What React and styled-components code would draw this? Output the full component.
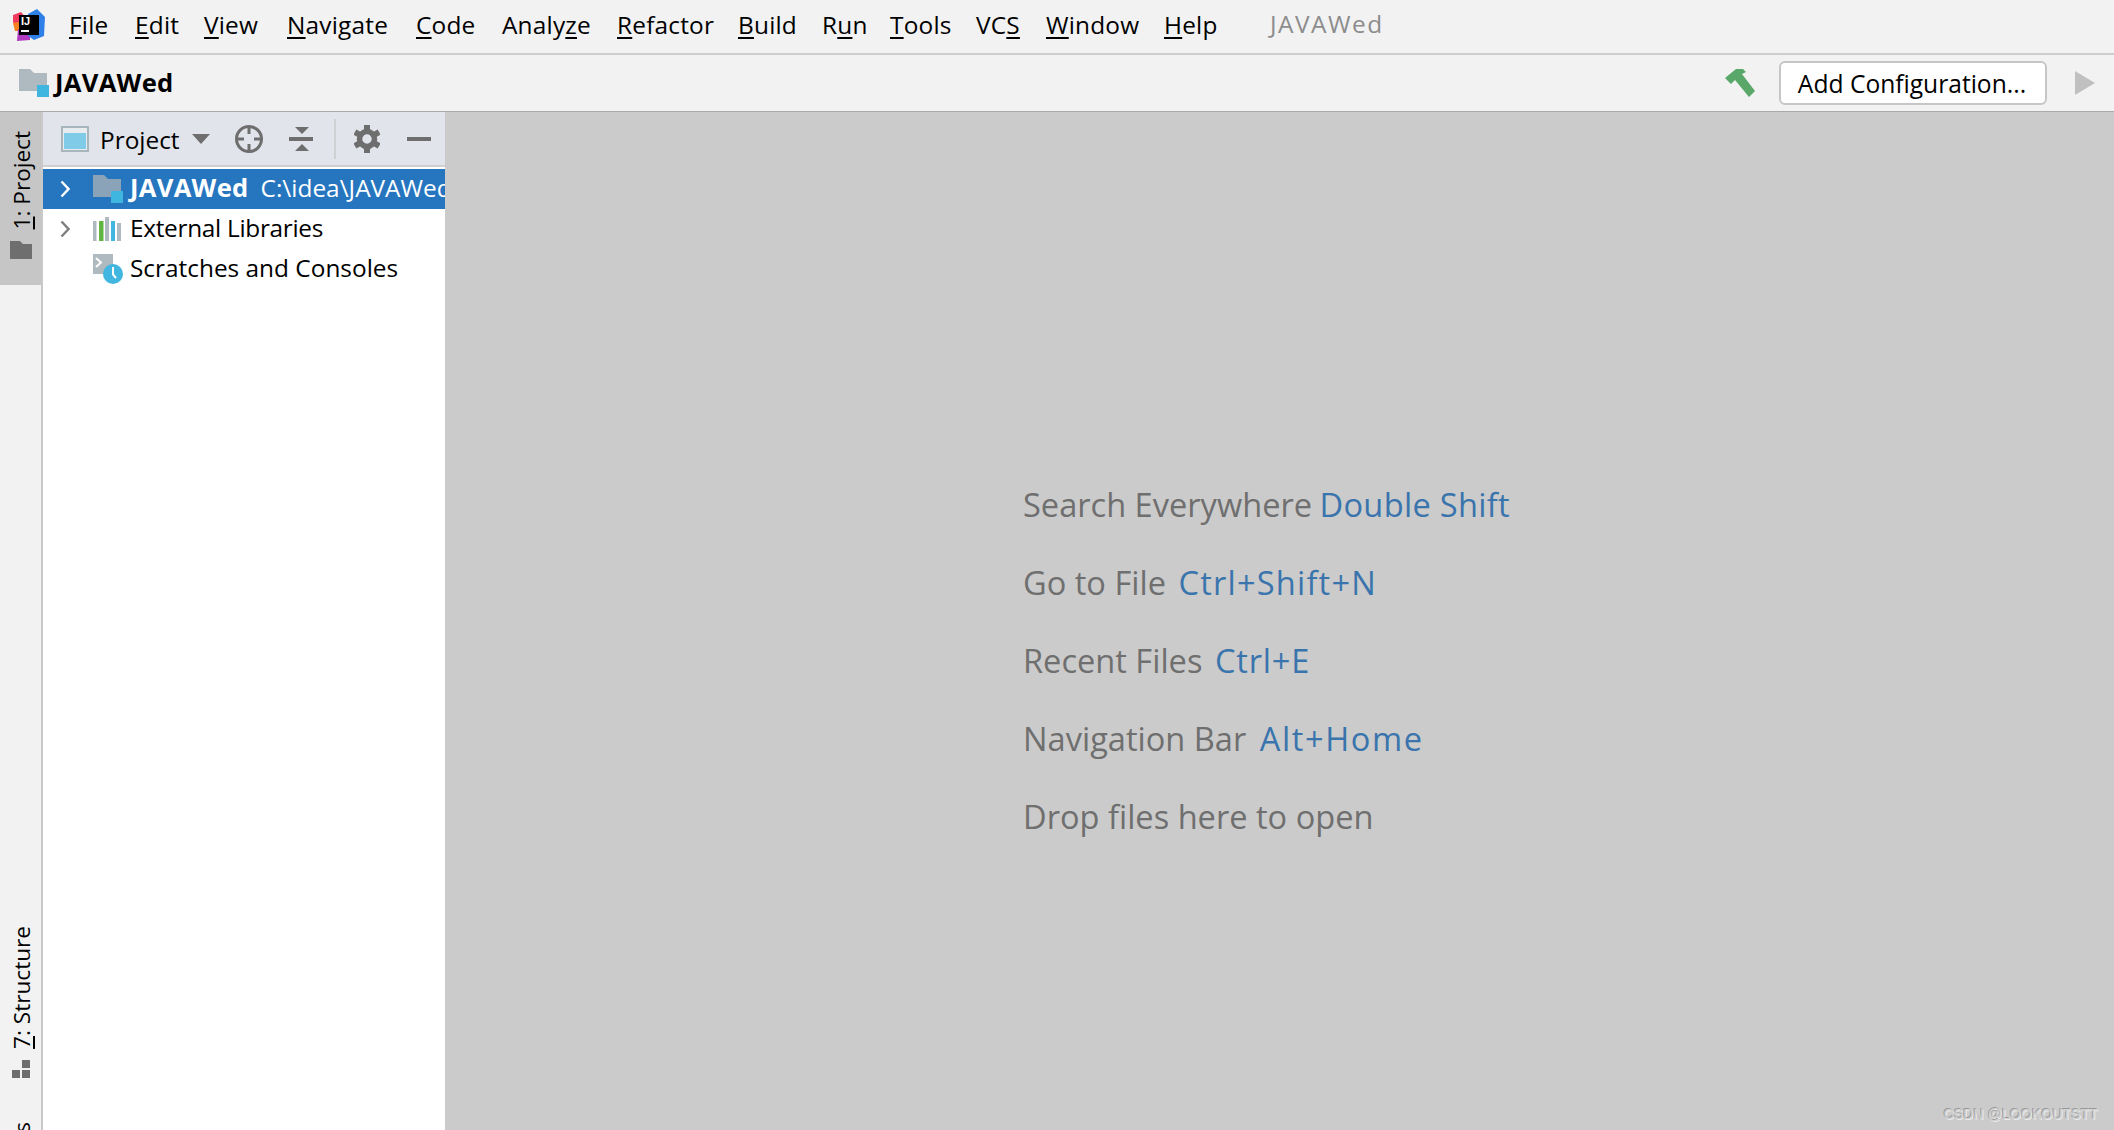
import React from "react";
import styled, { createGlobalStyle } from "styled-components";

const uiFont = `"Open Sans", "Noto Sans", sans-serif`;

const GlobalStyle = createGlobalStyle`
  html, body {
    margin: 0;
    padding: 0;
    overflow: hidden;
    background: #f2f2f2;
  }
  * {
    box-sizing: border-box;
  }
`;

const menuItems = [
  { pre: "", key: "F", post: "ile", w: 66 },
  { pre: "", key: "E", post: "dit", w: 69 },
  { pre: "", key: "V", post: "iew", w: 83 },
  { pre: "", key: "N", post: "avigate", w: 129 },
  { pre: "", key: "C", post: "ode", w: 86 },
  { pre: "Analy", key: "z", post: "e", w: 115 },
  { pre: "", key: "R", post: "efactor", w: 121 },
  { pre: "", key: "B", post: "uild", w: 84 },
  { pre: "R", key: "u", post: "n", w: 68 },
  { pre: "", key: "T", post: "ools", w: 86 },
  { pre: "VC", key: "S", post: "", w: 70 },
  { pre: "", key: "W", post: "indow", w: 118 },
  { pre: "", key: "H", post: "elp", w: 105 },
];

const hints = [
  { label: "Search Everywhere", keys: "Double Shift", spacing: 0.3, gap: -1 },
  { label: "Go to File", keys: "Ctrl+Shift+N", spacing: 1.2, gap: 4 },
  { label: "Recent Files", keys: "Ctrl+E", spacing: 0.8, gap: 4 },
  { label: "Navigation Bar", keys: "Alt+Home", spacing: 1.6, gap: 5 },
  { label: "Drop files here to open" },
];

const Window = styled.div`
  width: 2114px;
  height: 1130px;
  display: flex;
  flex-direction: column;
  overflow: hidden;
  position: relative;
  font-family: ${uiFont};
  color: #000;
`;

const MenuBar = styled.div`
  height: 55px;
  flex: none;
  display: flex;
  align-items: center;
  padding: 0 0 4px 69px;
  background: #f2f2f2;
  border-bottom: 2px solid #cdcdcd;
`;

const MenuItem = styled.div`
  width: ${(p) => p.$w}px;
  font-size: 24.4px;
  letter-spacing: 0.2px;
  white-space: nowrap;
  span {
    text-decoration: underline;
    text-decoration-thickness: 2px;
    text-underline-offset: 3px;
  }
`;

const ProjectTitle = styled.div`
  font-size: 24.4px;
  letter-spacing: 1.5px;
  color: #8c8c8c;
  margin: -2px 0 0 1px;
`;

const NavBar = styled.div`
  height: 57px;
  flex: none;
  display: flex;
  align-items: center;
  padding-left: 19px;
  background: #f2f2f2;
  border-bottom: 1px solid #a9a9a9;
`;

const NavTitle = styled.div`
  font-size: 25.6px;
  font-weight: 700;
  letter-spacing: 0.3px;
  margin: -2px 0 0 6px;
`;

const ConfigButton = styled.button`
  width: 268px;
  height: 44px;
  margin-left: 24px;
  padding: 0 2px 0 0;
  background: #fff;
  border: 2px solid #c6c6c6;
  border-radius: 6px;
  font-family: ${uiFont};
  font-size: 24.6px;
  color: #000;
`;

const Glyph = styled.svg`
  flex: none;
  display: block;
  margin-left: ${(p) => p.$ml || 0}px;
  margin-top: ${(p) => p.$mt || 0}px;
  margin-right: ${(p) => p.$mr || 0}px;
`;

const Spacer = styled.div`
  flex: 1;
`;

const Body = styled.div`
  flex: 1;
  display: flex;
  min-height: 0;
`;

const Stripe = styled.div`
  width: 43px;
  flex: none;
  display: flex;
  flex-direction: column;
  background: #f2f2f2;
  border-right: 2px solid #c9c9c9;
  overflow: hidden;
`;

const StripeTab = styled.div`
  width: 41px;
  flex: none;
  height: ${(p) => p.$h}px;
  margin-top: ${(p) => p.$mt || 0}px;
  padding-top: ${(p) => p.$pt || 0}px;
  background: ${(p) => (p.$active ? "#c6c6c6" : "transparent")};
  display: flex;
  flex-direction: column;
  align-items: center;
`;

const StripeLabel = styled.div`
  writing-mode: vertical-rl;
  transform: rotate(180deg);
  margin-left: 3px;
  font-size: 22.6px;
  line-height: 26px;
  white-space: nowrap;
  span {
    text-decoration: underline;
    text-decoration-thickness: 2px;
  }
`;

const ProjectPanel = styled.div`
  width: 402px;
  flex: none;
  background: #fff;
  overflow: hidden;
`;

const PanelToolbar = styled.div`
  height: 55px;
  display: flex;
  align-items: center;
  padding: 2px 0 1px 18px;
  background: #e1e4ea;
  border-bottom: 2px solid #cfcfcf;
  margin-bottom: 2px;
`;

const PanelTitle = styled.div`
  width: 78px;
  margin-left: 11px;
  font-size: 24.4px;
  white-space: nowrap;
`;

const ToolSeparator = styled.div`
  width: 2px;
  height: 40px;
  margin-left: 21px;
  background: #cfd0d3;
`;

const TreeRow = styled.div`
  height: 40px;
  display: flex;
  align-items: center;
  padding-left: 17px;
  white-space: nowrap;
  font-size: 24.4px;
  background: ${(p) => (p.$selected ? "#2675bf" : "transparent")};
  color: ${(p) => (p.$selected ? "#fff" : "#000")};
`;

const RowName = styled.span`
  margin: -4px 0 0 7px;
  font-weight: ${(p) => (p.$bold ? 700 : 400)};
  font-size: ${(p) => (p.$bold ? "25.6px" : "inherit")};
  letter-spacing: ${(p) => p.$spacing || 0}px;
`;

const RowPath = styled.span`
  margin: -4px 0 0 12px;
`;

const EditorArea = styled.div`
  flex: 1;
  background: #cbcbcb;
  padding: 354px 0 0 578px;
`;

const Hint = styled.div`
  height: 78px;
  font-size: 32.6px;
  line-height: 78px;
  color: #6f6f6f;
  white-space: nowrap;
`;

const HintKeys = styled.span`
  color: #3a74ad;
  margin-left: ${(p) => p.$gap}px;
  letter-spacing: ${(p) => p.$spacing}px;
`;

const Watermark = styled.div`
  position: absolute;
  right: 16px;
  bottom: 8px;
  font-family: "Liberation Sans", sans-serif;
  font-size: 14px;
  letter-spacing: 0.1px;
  color: #d0d0d0;
  text-shadow: -1px -1px 0 rgba(120, 120, 120, 0.6), 1px 1px 0 rgba(255, 255, 255, 0.6);
`;

const LogoMark = styled.svg`
  position: absolute;
  left: 12px;
  top: 8px;
`;

const AppLogo = () => (
  <LogoMark width="34" height="34" viewBox="0 0 34 34">
    <polygon points="1,7 9,4 14,10 6,22 1,14" fill="#f03a5f" />
    <polygon points="1,15 8,14 8,23 3,23" fill="#f58220" />
    <polygon points="6,21 18,26 18,32 5,33" fill="#b23ac0" />
    <polygon points="16,6 25,1 33,9 32,28 22,32 15,27" fill="#2f7fe8" />
    <rect x="7" y="7" width="20" height="20" fill="#000" />
    <text x="9" y="17" fontFamily="Liberation Sans" fontSize="11" fontWeight="700" fill="#fff">IJ</text>
    <rect x="9" y="22" width="8" height="2" fill="#fff" />
  </LogoMark>
);

const FolderIcon = ({ body = "#aeb9c0", ml }) => (
  <Glyph width="30" height="28" viewBox="0 0 30 28" $ml={ml}>
    <path d="M0 0h11l4 4h13v18H0z" fill={body} />
    <rect x="18" y="16" width="12" height="12" fill="#3fb6e0" />
  </Glyph>
);

const Chevron = ({ color, hidden }) => (
  <Glyph width="10" height="18" viewBox="0 0 10 18" style={hidden ? { visibility: "hidden" } : undefined}>
    <path d="M1.5 1.5L8.5 9L1.5 16.5" fill="none" stroke={color} strokeWidth="2.4" />
  </Glyph>
);

const LibrariesIcon = () => (
  <Glyph width="30" height="24" viewBox="0 0 30 24" $ml={23}>
    <rect x="0" y="4" width="3.5" height="20" fill="#aeb9c0" />
    <rect x="6" y="4" width="4.5" height="20" fill="#62b543" />
    <rect x="12" y="0" width="4" height="24" fill="#aeb9c0" />
    <rect x="18" y="4" width="4" height="20" fill="#40b6e0" />
    <rect x="24" y="6" width="4" height="18" fill="#aeb9c0" />
  </Glyph>
);

const ScratchIcon = () => (
  <Glyph width="30" height="30" viewBox="0 0 30 30" $ml={23}>
    <path d="M0 0h20v12a10 10 0 0 0-9 8H0z" fill="#aeb9c0" />
    <path d="M3 4l5 4.5L3 13" fill="none" stroke="#fff" strokeWidth="2" />
    <circle cx="20" cy="20" r="10" fill="#40b6e0" />
    <path d="M20 13v7.5l3 3.5" fill="none" stroke="#fff" strokeWidth="2" />
  </Glyph>
);

const Gear = () => (
  <Glyph width="26" height="28" viewBox="0 0 26 28" $ml={18}>
    <g fill="#6e6e6e">
      {[0, 60, 120, 180, 240, 300].map((a) => (
        <rect key={a} x="10" y="0" width="6" height="7" transform={`rotate(${a} 13 14)`} />
      ))}
    </g>
    <circle cx="13" cy="14" r="7.5" fill="none" stroke="#6e6e6e" strokeWidth="5.5" />
  </Glyph>
);

export default function App() {
  return (
    <Window>
      <GlobalStyle />
      <MenuBar>
        <AppLogo />
        {menuItems.map((m) => (
          <MenuItem key={m.key + m.w} $w={m.w}>
            {m.pre}
            <span>{m.key}</span>
            {m.post}
          </MenuItem>
        ))}
        <ProjectTitle>JAVAWed</ProjectTitle>
      </MenuBar>

      <NavBar>
        <FolderIcon />
        <NavTitle>JAVAWed</NavTitle>
        <Spacer />
        <Glyph width="30" height="28" viewBox="0 0 30 28">
          <path d="M0 9L11 0h7l3 3-4 2 13 17-6 6L10 11l-4 4z" fill="#59a869" />
        </Glyph>
        <ConfigButton>Add Configuration...</ConfigButton>
        <Glyph width="20" height="24" viewBox="0 0 20 24" $ml={28} $mr={19}>
          <polygon points="0,0 20,12 0,24" fill="#c0c0c0" />
        </Glyph>
      </NavBar>

      <Body>
        <Stripe>
          <StripeTab $active $h={173} $pt={19}>
            <StripeLabel>
              <span>1</span>: Project
            </StripeLabel>
            <Glyph width="22" height="18" viewBox="0 0 22 18" $mt={12}>
              <path d="M0 0h10l3 3h9v15H0z" fill="#6e6e6e" />
            </Glyph>
          </StripeTab>
          <StripeTab $h={160} $mt={641}>
            <StripeLabel>
              <span>7</span>: Structure
            </StripeLabel>
            <Glyph width="18" height="18" viewBox="0 0 18 18" $mt={11}>
              <g fill="#6e6e6e">
                <rect x="10" y="0" width="8" height="8" />
                <rect x="0" y="10" width="8" height="8" />
                <rect x="10" y="10" width="8" height="8" />
              </g>
            </Glyph>
          </StripeTab>
          <StripeTab $h={130} $mt={36}>
            <StripeLabel>
              <span>2</span>: Favorites
            </StripeLabel>
          </StripeTab>
        </Stripe>

        <ProjectPanel>
          <PanelToolbar>
            <Glyph width="28" height="26" viewBox="0 0 28 26">
              <rect width="28" height="26" fill="#a9b5bd" />
              <rect x="2" y="2" width="24" height="22" fill="#e8ecef" />
              <rect x="3" y="7" width="22" height="16" fill="#7fcbe8" />
            </Glyph>
            <PanelTitle>Project</PanelTitle>
            <Glyph width="18" height="10" viewBox="0 0 18 10" $ml={14}>
              <polygon points="0,0 18,0 9,10" fill="#6e6e6e" />
            </Glyph>
            <Glyph width="28" height="28" viewBox="0 0 28 28" $ml={25}>
              <circle cx="14" cy="14" r="12.5" fill="none" stroke="#6e6e6e" strokeWidth="3" />
              <path d="M14 2v7M14 19v7M2 14h7M19 14h7" stroke="#6e6e6e" strokeWidth="3" />
            </Glyph>
            <Glyph width="24" height="24" viewBox="0 0 24 24" $ml={26}>
              <polygon points="6,0 20,0 13,7" fill="#6e6e6e" />
              <rect x="0" y="10" width="24" height="4" fill="#6e6e6e" />
              <polygon points="13,17 20,24 6,24" fill="#6e6e6e" />
            </Glyph>
            <ToolSeparator />
            <Gear />
            <Glyph width="24" height="4" viewBox="0 0 24 4" $ml={27}>
              <rect width="24" height="4" fill="#6e6e6e" />
            </Glyph>
          </PanelToolbar>

          <TreeRow $selected>
            <Chevron color="#fff" />
            <FolderIcon body="#8aa3b8" ml={23} />
            <RowName $bold $spacing={0.3}>JAVAWed</RowName>
            <RowPath>C:\idea\JAVAWed</RowPath>
          </TreeRow>
          <TreeRow>
            <Chevron color="#7f7f7f" />
            <LibrariesIcon />
            <RowName $spacing={-0.3}>External Libraries</RowName>
          </TreeRow>
          <TreeRow>
            <Chevron hidden />
            <ScratchIcon />
            <RowName>Scratches and Consoles</RowName>
          </TreeRow>
        </ProjectPanel>

        <EditorArea>
          {hints.map((h) => (
            <Hint key={h.label}>
              {h.label} {h.keys && <HintKeys $spacing={h.spacing} $gap={h.gap}>{h.keys}</HintKeys>}
            </Hint>
          ))}
        </EditorArea>
      </Body>

      <Watermark>CSDN @LOOKOUTSTT</Watermark>
    </Window>
  );
}
